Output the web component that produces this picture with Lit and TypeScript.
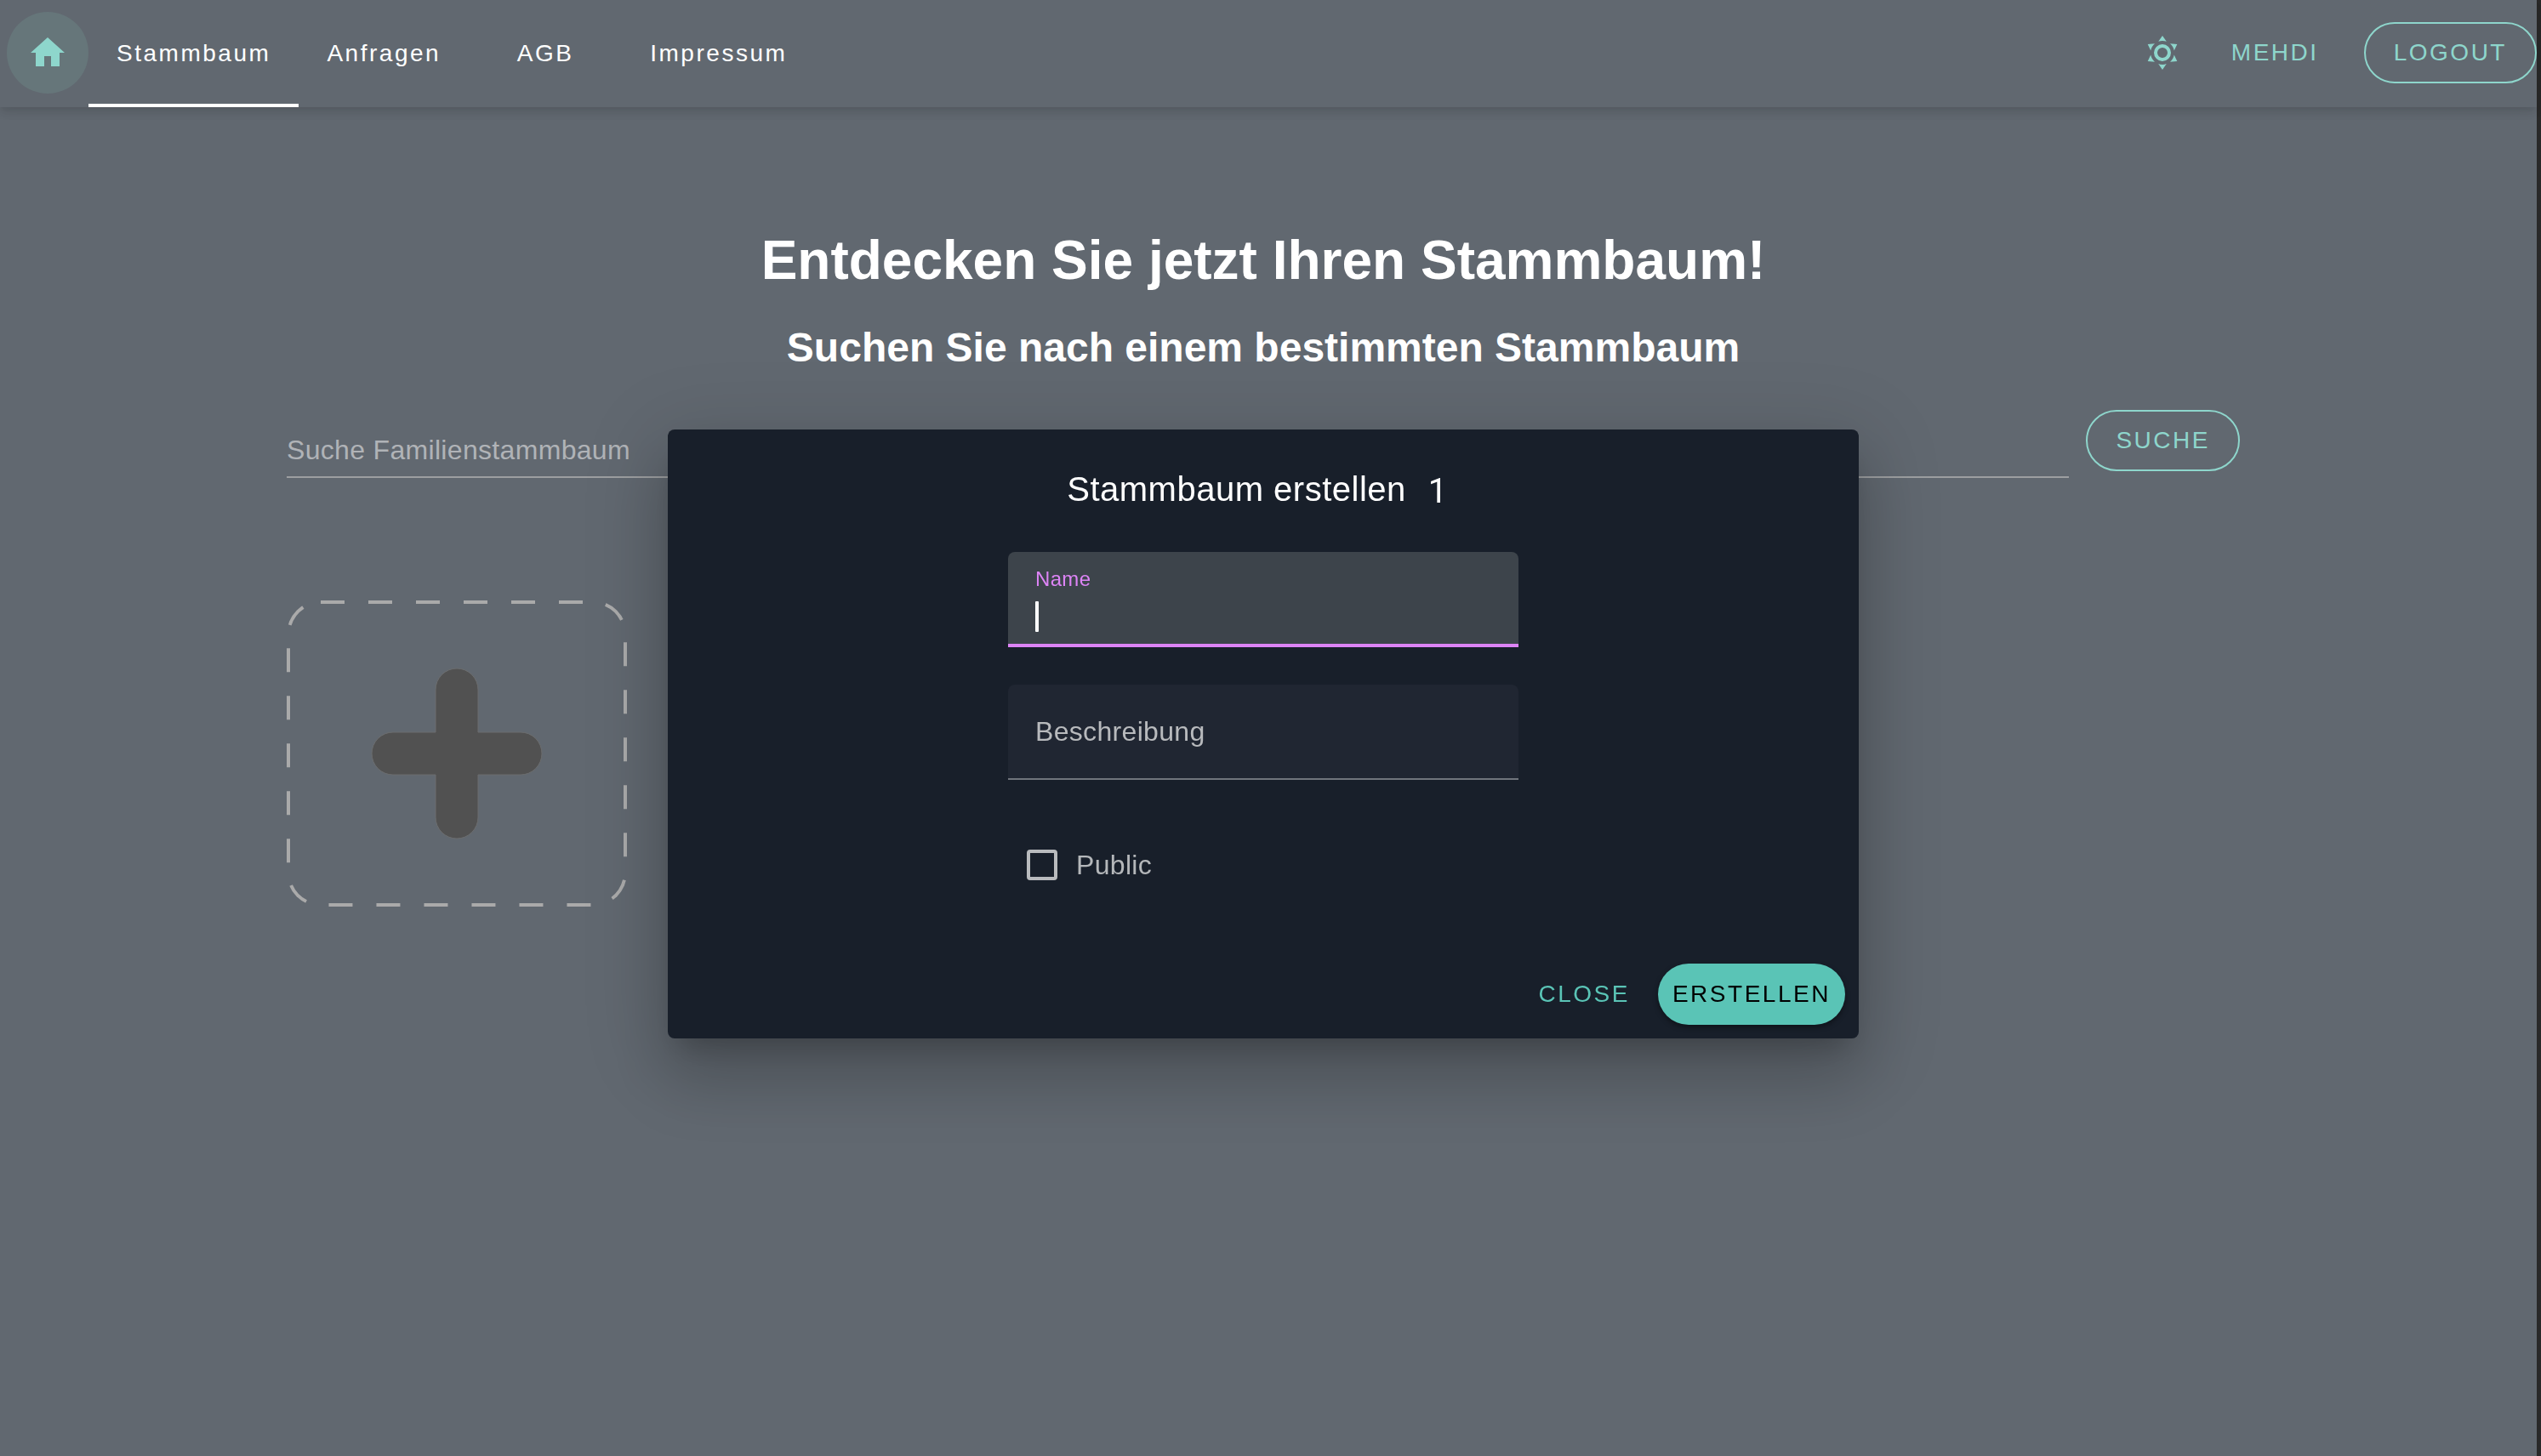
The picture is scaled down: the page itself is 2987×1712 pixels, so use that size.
import { LitElement, html, css, svg } from "lit";
import { customElement, state } from "lit/decorators.js";

const HOME = "M10,20V14H14V20H19V12H22L12,3L2,12H5V20H10Z";
const SUNNY =
  "M12,7A5,5 0 0,1 17,12A5,5 0 0,1 12,17A5,5 0 0,1 7,12A5,5 0 0,1 12,7M12,9A3,3 0 0,0 9,12A3,3 0 0,0 12,15A3,3 0 0,0 15,12A3,3 0 0,0 12,9M12,2L14.39,5.42C13.65,5.15 12.84,5 12,5C11.16,5 10.35,5.15 9.61,5.42L12,2M3.34,7L7.5,6.65C6.9,7.16 6.36,7.78 5.94,8.5C5.5,9.24 5.25,10 5.11,10.79L3.34,7M3.36,17L5.12,13.23C5.26,14 5.53,14.78 5.95,15.5C6.37,16.24 6.91,16.86 7.5,17.37L3.36,17M20.65,7L18.88,10.79C18.74,10 18.47,9.23 18.05,8.5C17.63,7.78 17.1,7.15 16.5,6.64L20.65,7M20.64,17L16.5,17.36C17.09,16.85 17.62,16.22 18.04,15.5C18.46,14.77 18.73,14 18.87,13.21L20.64,17M12,22L9.59,18.56C10.33,18.83 11.14,19 12,19C12.82,19 13.63,18.83 14.37,18.56L12,22Z";

const icon = (d: string) => html`
  <svg class="icon" viewBox="0 0 24 24" aria-hidden="true">${svg`<path d=${d} />`}</svg>
`;

const TABS = ["Stammbaum", "Anfragen", "AGB", "Impressum"];

@customElement("app-root")
export class AppRoot extends LitElement {
  @state() private active = 0;

  static styles = css`
    :host {
      display: block;
      font-family: "Liberation Sans", Helvetica, Arial, sans-serif;
      --teal: #8ed6cc;
      color: #fff;
    }
    * {
      box-sizing: border-box;
    }
    button,
    input {
      font: inherit;
      color: inherit;
      border: 0;
      background: none;
      outline: none;
    }
    .page {
      min-height: 100vh;
      background: #616870;
      border-right: 5px solid #292929;
      display: flex;
      flex-direction: column;
    }
    .bar {
      height: 126px;
      display: flex;
      align-items: stretch;
      box-shadow:
        0 4px 8px -2px rgba(0, 0, 0, 0.08),
        0 8px 10px rgba(0, 0, 0, 0.05),
        0 2px 20px rgba(0, 0, 0, 0.04);
    }
    .icon {
      display: block;
      width: 48px;
      height: 48px;
      fill: currentColor;
    }
    .round {
      width: 96px;
      height: 96px;
      padding: 24px;
      border-radius: 50%;
      color: var(--teal);
    }
    .home {
      margin: 14px 0 0 8px;
      background: #66767a;
    }
    .tabs {
      display: flex;
    }
    .tab {
      min-width: 180px;
      padding: 0 33px;
      border-top: 4px solid transparent;
      border-bottom: 4px solid transparent;
      color: #fff;
      font-size: 28px;
      letter-spacing: 0.09em;
      text-decoration: none;
      display: flex;
      align-items: center;
      justify-content: center;
    }
    .tab.active {
      border-bottom-color: #fff;
    }
    .tools {
      margin-left: auto;
      display: flex;
      align-items: center;
      padding-bottom: 2px;
    }
    .btn {
      height: 72px;
      padding: 0 33px;
      border-radius: 36px;
      font-size: 28px;
      letter-spacing: 0.09em;
      color: var(--teal);
      white-space: nowrap;
    }
    .outlined {
      border: 2px solid var(--teal);
    }
    .tools .outlined {
      margin-left: 20px;
    }
    .content {
      width: 90%;
      max-width: 2296px;
      margin: 0 auto;
      padding-top: 140px;
    }
    .wrap {
      padding-right: 12px;
    }
    h1,
    h2 {
      margin: 0;
      text-align: center;
      font-weight: 700;
    }
    h1 {
      font-size: 64px;
      line-height: 80px;
    }
    h2 {
      margin-top: 33px;
      font-size: 48px;
      line-height: 60px;
    }
    .search {
      margin-top: 43px;
      display: flex;
      align-items: flex-start;
      gap: 20px;
    }
    .stack {
      display: grid;
    }
    .stack > * {
      grid-area: 1 / 1;
    }
    .stack label {
      pointer-events: none;
    }
    .query {
      flex: 1;
      height: 80px;
      border-bottom: 2px solid #9d9fa1;
      font-size: 32px;
      line-height: 40px;
      letter-spacing: 0.01em;
      color: #b0b3b7;
    }
    .query label {
      align-self: end;
      padding-bottom: 11px;
    }
    .query input,
    .field input {
      width: 100%;
      padding: 0;
    }
    .create {
      display: block;
      margin-top: 144px;
      padding: 0;
    }
    .create svg {
      display: block;
      width: 400px;
      height: 360px;
      border-radius: 40px;
      overflow: hidden;
    }
    .dash {
      fill: none;
      stroke: #aaa;
      stroke-width: 8;
      stroke-dasharray: 28 28;
    }
    .plus {
      fill: #515151;
      stroke: #6c6d6e;
      stroke-width: 1;
    }
    .overlay {
      position: fixed;
      inset: 0;
      padding: 14px 17px 0 0;
      display: flex;
      align-items: center;
      justify-content: center;
    }
    .dialog {
      width: 1400px;
      max-width: 96%;
      padding: 38px 16px 16px;
      border-radius: 8px;
      background: #181f2a;
      display: flex;
      flex-direction: column;
      align-items: center;
      box-shadow:
        0 22px 30px -14px rgba(0, 0, 0, 0.2),
        0 48px 76px 6px rgba(0, 0, 0, 0.14),
        0 18px 92px 16px rgba(0, 0, 0, 0.12);
    }
    .title {
      display: flex;
      gap: 26px;
      padding-right: 14px;
      font-size: 40px;
      line-height: 64px;
      letter-spacing: 0.0125em;
    }
    .step {
      font-family: Roboto, sans-serif;
      padding-top: 6px;
      line-height: 58px;
    }
    .form {
      width: 600px;
      max-width: 100%;
      margin-top: 42px;
      display: flex;
      flex-direction: column;
    }
    .field {
      height: 112px;
      padding: 0 32px;
      border-radius: 8px 8px 0 0;
      border-bottom: 2px solid #70757c;
      background: #202632;
      color: #b8babd;
      font-size: 32px;
      line-height: 110px;
      letter-spacing: 0.01em;
    }
    .field + .field {
      margin-top: 44px;
    }
    .field.focused {
      background: #3d444b;
      border-bottom: 4px solid #dd84f5;
      color: #fff;
    }
    .focused label {
      padding-top: 16px;
      font-size: 24px;
      line-height: 32px;
      color: #dd84f5;
    }
    .focused input {
      caret-color: transparent;
    }
    .caret {
      width: 4px;
      height: 36px;
      margin-top: 58px;
      border-radius: 1px;
      background: #fff;
    }
    .check {
      height: 80px;
      margin: 60px 0 0 22px;
      display: flex;
      align-items: center;
      gap: 22px;
      font-size: 32px;
      letter-spacing: 0.01em;
      color: #b4b7ba;
    }
    .check input {
      appearance: none;
      width: 36px;
      height: 36px;
      margin: 0;
      border: 4px solid #b9bbbe;
      border-radius: 4px;
    }
    .actions {
      align-self: flex-end;
      margin-top: 76px;
      display: flex;
      gap: 16px;
    }
    .actions .btn {
      padding: 0 17px;
      color: #5ac4b6;
    }
    .actions .filled {
      background: #5ac4b6;
      color: #000;
      box-shadow: 0 3px 6px rgba(0, 0, 0, 0.4);
    }
  `;

  render() {
    return html`
      <div class="page">
        <header class="bar">
          <button class="round home" aria-label="Home">${icon(HOME)}</button>
          <nav class="tabs">
            ${TABS.map(
              (name, i) => html`
                <a class="tab ${i === this.active ? "active" : ""}" href="#" @click=${() => (this.active = i)}>${name}</a>
              `
            )}
          </nav>
          <div class="tools">
            <button class="round" aria-label="Theme">${icon(SUNNY)}</button>
            <button class="btn">MEHDI</button>
            <button class="btn outlined">LOGOUT</button>
          </div>
        </header>
        <div class="wrap">
          <main class="content">
            <h1>Entdecken Sie jetzt Ihren Stammbaum!</h1>
            <h2>Suchen Sie nach einem bestimmten Stammbaum</h2>
            <form class="search">
              <div class="query stack">
                <input id="query" type="text" />
                <label for="query">Suche Familienstammbaum</label>
              </div>
              <button class="btn outlined" type="button">SUCHE</button>
            </form>
            <button class="create" aria-label="Stammbaum erstellen">
              <svg viewBox="0 0 400 360" aria-hidden="true">
                <rect class="dash" width="400" height="360" rx="40" />
                <path
                  class="plus"
                  d="M175 105a25 25 0 0 1 50 0v50h50a25 25 0 0 1 0 50h-50v50a25 25 0 0 1-50 0v-50h-50a25 25 0 0 1 0-50h50z"
                />
              </svg>
            </button>
          </main>
        </div>
      </div>
      <div class="overlay">
        <section class="dialog" role="dialog" aria-labelledby="title">
          <div class="title"><span id="title">Stammbaum erstellen</span><span class="step">1</span></div>
          <div class="form">
            <div class="field focused stack">
              <input id="name" type="text" />
              <label for="name">Name</label>
              <span class="caret"></span>
            </div>
            <div class="field stack">
              <input id="description" type="text" />
              <label for="description">Beschreibung</label>
            </div>
            <div class="check">
              <input id="public" type="checkbox" />
              <label for="public">Public</label>
            </div>
          </div>
          <div class="actions">
            <button class="btn">CLOSE</button>
            <button class="btn filled">ERSTELLEN</button>
          </div>
        </section>
      </div>
    `;
  }
}
